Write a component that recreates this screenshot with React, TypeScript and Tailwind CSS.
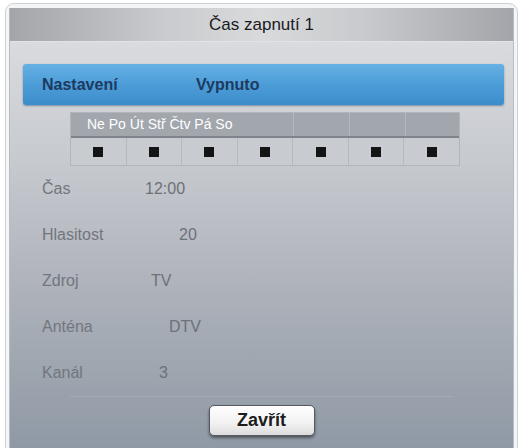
import React from "react";

const rows: { label: string; value: string; w: string }[] = [
  { label: "Čas", value: "12:00", w: "w-[103px]" },
  { label: "Hlasitost", value: "20", w: "w-[137px]" },
  { label: "Zdroj", value: "TV", w: "w-[109px]" },
  { label: "Anténa", value: "DTV", w: "w-[127px]" },
  { label: "Kanál", value: "3", w: "w-[117px]" },
];

export default function App() {
  const font = { fontFamily: '"Liberation Sans", Arial, sans-serif' };
  return (
    <div className="w-[523px] h-[448px] bg-white overflow-hidden pt-[3px] px-[5px]" style={font}>
      <div className="h-[446px] rounded-t-[9px] border border-[#cfd1d5] pt-[4px] px-[3px] bg-[#f4f5f6]">
        <div className="h-full flex flex-col border-x border-[#b9bdc3]">
          {/* title bar */}
          <div className="h-[34px] shrink-0 flex items-center justify-center bg-[linear-gradient(90deg,#a3a5aa,#c9cacd_30%,#d9dadc_50%,#c9cacd_70%,#a3a5aa)] border-b border-[#e2e3e5]">
            <span className="text-[17px] text-[#1a1b1e] leading-none">Čas zapnutí 1</span>
          </div>
          {/* body */}
          <div className="flex-1 flex flex-col bg-[linear-gradient(180deg,#d9dbde_0%,#c6c9ce_30%,#b3b6be_55%,#a2a9b2_75%,#8f99a5_100%)] pt-[22px]">
            <div className="ml-[13px] mr-[9px] h-[41px] rounded-[3px] flex items-center pl-[19px] bg-[linear-gradient(180deg,#66b0e4,#4c9dd7_50%,#3b8cca)] shadow-[0_1px_2px_rgba(40,70,110,0.5)]">
              <span className="w-[154px] text-[16px] font-bold text-[#1d3a60]">Nastavení</span>
              <span className="text-[16px] font-bold text-[#1d3a60]">Vypnuto</span>
            </div>
            {/* week grid */}
            <div className="ml-[60px] mt-[7px] w-[390px] border border-[#b2b5bb]">
              <div className="h-[25px] flex bg-[#a2a6ad] border-b-2 border-[#7f838b]">
                <div className="w-[223px] flex items-center pl-[16px] border-r border-[#b4b7bd]">
                  <span className="text-[14px] text-white font-medium">Ne Po Út Stř Čtv Pá So</span>
                </div>
                <div className="w-[56px] border-r border-[#b4b7bd]" />
                <div className="w-[56px] border-r border-[#b4b7bd]" />
                <div className="flex-1" />
              </div>
              <div className="h-[27px] flex bg-[#c8cbd0]">
                {[0, 1, 2, 3, 4, 5, 6].map((i) => (
                  <div
                    key={i}
                    className={
                      "flex-1 flex items-center justify-center " +
                      (i < 6 ? "border-r border-[#b6b9be]" : "")
                    }
                  >
                    <div className="w-[10px] h-[10px] bg-[#141414]" />
                  </div>
                ))}
              </div>
            </div>
            {/* rows */}
            <div className="flex flex-col">
              {rows.map((r) => (
                <div key={r.label} className="h-[46px] flex items-center pl-[32px]">
                  <span className={r.w + " text-[16px] text-[#72767e]"}>{r.label}</span>
                  <span className="text-[16px] text-[#6d7179]">{r.value}</span>
                </div>
              ))}
            </div>
            <div className="mx-[60px] h-px bg-[#a3acb6]" />
            <div className="flex justify-center pt-[8px]">
              <div className="w-[106px] h-[31px] rounded-[5px] border border-[#555a60] bg-[linear-gradient(180deg,#ffffff,#f1f1f1_60%,#dcdcdc)] shadow-[0_2px_3px_rgba(0,0,0,0.45)] flex items-center justify-center">
                <span className="text-[18px] font-bold text-[#1c1c1c]">Zavřít</span>
              </div>
            </div>
          </div>
        </div>
      </div>
    </div>
  );
}
